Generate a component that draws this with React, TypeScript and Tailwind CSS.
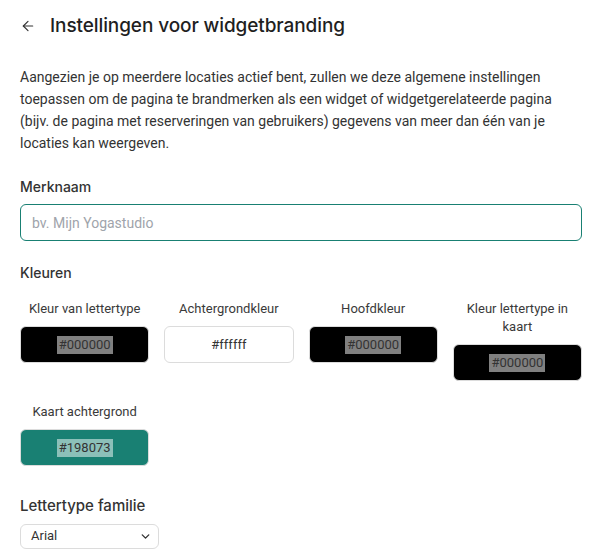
import { ArrowLeft, ChevronDown } from 'lucide-react';

const colors = [
    { label: 'Kleur van lettertype', value: '#000000' },
    { label: 'Achtergrondkleur', value: '#ffffff' },
    { label: 'Hoofdkleur', value: '#000000' },
    { label: 'Kleur lettertype in kaart', value: '#000000' },
    { label: 'Kaart achtergrond', value: '#198073' },
];

function Swatch({ label, value }: { label: string; value: string }) {
    return (
        <div className="flex flex-col items-stretch gap-2">
            <div className="text-[13px] leading-[18px] text-[#3a3a3a] text-center px-2">{label}</div>
            <div
                className="h-[37px] rounded-md border border-[#dcdcdc] flex items-center justify-center"
                style={{ backgroundColor: value }}
            >
                <span className="text-[13px] leading-[18px] px-[2px] text-[#333] bg-white/50">{value}</span>
            </div>
        </div>
    );
}

export default function App() {
    return (
        <div className="w-[602px] min-h-[558px] bg-white px-5 pt-[14px] font-['Roboto',sans-serif] text-[#222]">
            <div className="flex items-center gap-[14px] h-6">
                <ArrowLeft className="w-[16px] h-[16px] text-[#333]" strokeWidth={1.75} />
                <h1 className="text-[19px] font-medium text-[#1f1f1f] font-['Inter',sans-serif] tracking-[-0.1px]">
                    Instellingen voor widgetbranding
                </h1>
            </div>

            <p className="mt-[28px] text-[14px] leading-[22px] text-[#333]">
                Aangezien je op meerdere locaties actief bent, zullen we deze algemene instellingen toepassen om de pagina
                te brandmerken als een widget of widgetgerelateerde pagina (bijv. de pagina met reserveringen van
                gebruikers) gegevens van meer dan één van je locaties kan weergeven.
            </p>

            <div className="mt-[22px] text-[14px] font-medium text-[#333] font-['Inter',sans-serif]">Merknaam</div>
            <input
                className="mt-[7px] w-full h-[37px] rounded-md border border-[#198073] px-[11px] text-[14px] text-[#333] placeholder:text-[#a0a4ab] outline-none"
                placeholder="bv. Mijn Yogastudio"
            />

            <div className="mt-[21px] text-[14px] font-medium text-[#333] font-['Inter',sans-serif]">Kleuren</div>
            <div className="mt-[17px] grid grid-cols-4 gap-x-[15px] gap-y-[22px] items-start">
                {colors.map((c) => (
                    <Swatch key={c.label} label={c.label} value={c.value} />
                ))}
            </div>

            <div className="mt-[29px] text-[15px] font-medium text-[#333] font-['Inter',sans-serif]">Lettertype familie</div>
            <div className="mt-[6px] relative w-[139px] h-[25px] border border-[#dcdcdc] rounded-md flex items-center px-[10px]">
                <span className="text-[13px] text-[#333]">Arial</span>
                <ChevronDown className="absolute right-[6px] w-[13px] h-[13px] text-[#333]" strokeWidth={2.5} />
            </div>
        </div>
    );
}
